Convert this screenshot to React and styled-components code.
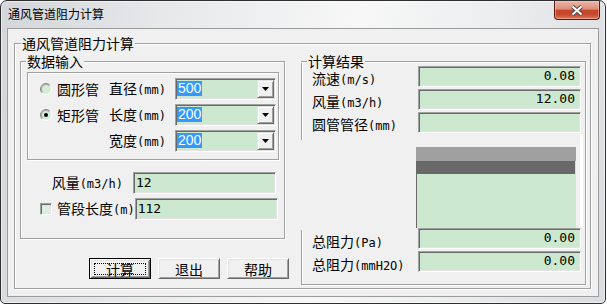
import React from 'react';
import styled, { createGlobalStyle, css } from 'styled-components';

const GREEN = '#cce8cf';
const FACE = '#f0f0f0';
const FONT = '"Noto Sans CJK SC", "Noto Sans", sans-serif';
const MONO = '"DejaVu Sans Mono", "Liberation Mono", monospace';

const GlobalStyle = createGlobalStyle`
  *, *::before, *::after { box-sizing: border-box; }
  html, body { margin: 0; padding: 0; background: #ffffff; }
  body { font-family: ${FONT}; font-size: 14px; color: #000; }
`;

const etched = css`
  border: 1px solid #a0a0a0;
  box-shadow: inset 1px 1px 0 #ffffff, 1px 1px 0 #ffffff;
`;

const sunken = css`
  border: 1px solid;
  border-color: #a0a0a0 #ffffff #ffffff #a0a0a0;
  box-shadow: inset 1px 1px 0 #696969, inset -1px -1px 0 #e3e3e3;
`;

const Window = styled.div`
  width: 606px;
  height: 304px;
  display: flex;
  flex-direction: column;
  padding: 0 6px 6px;
  border: 1px solid #2e2e2e;
  border-radius: 7px 7px 5px 5px;
  background: linear-gradient(100deg, #d3d6da 0%, #e6e8ea 25%, #f7f7f7 55%, #eceeef 75%, #d9dce0 100%);
  box-shadow: inset 0 0 0 1px rgba(255, 255, 255, 0.55);
  overflow: hidden;
`;

const TitleBar = styled.div`
  flex: none;
  height: 27px;
  display: flex;
  align-items: flex-start;
  justify-content: space-between;
`;

const Title = styled.div`
  padding: 6px 0 0 1px;
  font-size: 12px;
  line-height: 14px;
  color: #000;
`;

const CloseButton = styled.div`
  width: 46px;
  height: 19px;
  margin-right: -1px;
  display: flex;
  align-items: center;
  justify-content: center;
  border: 1px solid #5a1c12;
  border-top: 0;
  border-radius: 0 0 4px 4px;
  background: linear-gradient(to bottom, #ebb6a7 0%, #dc8e79 45%, #c7462a 52%, #c64a2f 75%, #dd7a5c 100%);
  box-shadow: inset 0 0 0 1px rgba(255, 210, 190, 0.45);
`;

const Client = styled.div`
  flex: 1;
  display: flex;
  flex-direction: column;
  padding: 14px 7px 7px 6px;
  background: ${FACE};
  border: 1px solid #9c9c9c;
`;

const OuterGroup = styled.div`
  ${etched}
  flex: 1;
  display: flex;
  flex-direction: column;
  padding: 0 4px 0 5px;
`;

const Legend = styled.div`
  align-self: flex-start;
  height: 14px;
  line-height: 14px;
  padding: 0 1px;
  margin: -8px 0 ${(p) => p.$mb}px ${(p) => p.$ml}px;
  background: ${FACE};
  white-space: nowrap;
`;

const Lat = styled.span`
  font-family: ${MONO};
  font-size: 12px;
`;

const Columns = styled.div`
  display: grid;
  grid-template-columns: 265px 285px;
  column-gap: 16px;
  align-items: start;
`;

const LeftColumn = styled.div`
  display: flex;
  flex-direction: column;
`;

const DataGroup = styled.div`
  ${etched}
  height: 178px;
  display: flex;
  flex-direction: column;
`;

const InnerBox = styled.div`
  ${etched}
  height: 88px;
  margin: 0 5px 0 6px;
  padding: 5px 2px 0 12px;
  display: grid;
  grid-template-columns: 12px 47px 1fr 101px;
  grid-auto-rows: 22px;
  row-gap: 4px;
  align-items: center;
`;

const RadioSvg = styled.svg`
  display: block;
`;

const RadioText = styled.span`
  margin-left: 5px;
  line-height: 16px;
  white-space: nowrap;
`;

const ShapeLabel = styled.span`
  grid-column: ${(p) => p.$col || 'auto'};
  text-align: right;
  padding-right: 9px;
  line-height: 16px;
  white-space: nowrap;
`;

const Combo = styled.div`
  ${sunken}
  height: 22px;
  padding: 1px;
  display: flex;
  align-items: stretch;
  justify-content: space-between;
  background: ${GREEN};
`;

const Selected = styled.span`
  align-self: flex-start;
  margin-top: 1px;
  height: 15px;
  line-height: 15px;
  padding: 0 1px;
  background: #3399ff;
  color: #ffffff;
  font-family: "Liberation Sans", Arial, sans-serif;
  font-size: 14px;
`;

const DropButton = styled.span`
  width: 17px;
  display: flex;
  align-items: center;
  justify-content: center;
  background: ${FACE};
  border: 1px solid;
  border-color: #e3e3e3 #696969 #696969 #e3e3e3;
  box-shadow: inset 1px 1px 0 #ffffff, inset -1px -1px 0 #a0a0a0;
`;

const FieldRow = styled.div`
  height: 22px;
  display: flex;
  align-items: center;
  justify-content: ${(p) => (p.$end ? 'flex-end' : 'flex-start')};
  margin: ${(p) => p.$mt}px 8px 0 0;
`;

const FieldLabel = styled.span`
  line-height: 16px;
  white-space: nowrap;
  margin: 0 ${(p) => p.$mr || 0}px 0 ${(p) => p.$ml || 0}px;
`;

const Edit = styled.div`
  ${sunken}
  flex: none;
  width: ${(p) => p.$w}px;
  height: ${(p) => p.$h}px;
  margin-left: ${(p) => (p.$auto ? 'auto' : '0')};
  margin-right: ${(p) => p.$mr || 0}px;
  padding: ${(p) => (p.$right ? '0 5px 1px 0' : '0 0 1px 2px')};
  display: flex;
  align-items: center;
  justify-content: ${(p) => (p.$right ? 'flex-end' : 'flex-start')};
  background: ${GREEN};
  font-family: ${MONO};
  font-size: 13px;
  line-height: 16px;
`;

const CheckBox = styled.span`
  ${sunken}
  flex: none;
  width: 12px;
  height: 12px;
  margin-left: 19px;
  background: #dcefdd;
`;

const ButtonRow = styled.div`
  display: flex;
  justify-content: flex-end;
  gap: 7px;
  margin: 19px -4px 0 0;
`;

const Button = styled.button`
  width: 62px;
  height: 21px;
  margin: 0;
  padding: 0;
  display: flex;
  align-items: center;
  justify-content: center;
  font-family: ${FONT};
  font-size: 14px;
  line-height: 16px;
  color: #000;
  background: ${FACE};
  border: 1px solid;
  border-color: #ffffff #696969 #696969 #ffffff;
  box-shadow: inset 1px 1px 0 #e3e3e3, inset -1px -1px 0 #a0a0a0;
  ${(p) =>
    p.$default &&
    css`
      border: 1px solid #000000;
      box-shadow: inset 1px 1px 0 #ffffff, inset -1px -1px 0 #696969,
        inset 2px 2px 0 #e3e3e3, inset -2px -2px 0 #a0a0a0;
    `}
`;

const FocusRect = styled.span`
  width: calc(100% - 8px);
  height: calc(100% - 7px);
  display: flex;
  align-items: center;
  justify-content: center;
  border: 1px dotted #000000;
`;

const ResultGroup = styled.div`
  height: 224px;
  display: flex;
  flex-direction: column;
  border: 1px solid #a0a0a0;
  border-left: 0;
  box-shadow: inset 0 1px 0 #ffffff, 1px 1px 0 #ffffff;
  background-color: ${FACE};
  background-image:
    linear-gradient(to bottom, #a0a0a0 0 78px, transparent 78px 168px, #a0a0a0 168px 100%),
    linear-gradient(to bottom, #ffffff 0 78px, transparent 78px 168px, #ffffff 168px 100%);
  background-size: 1px 100%, 1px 100%;
  background-position: 0 0, 1px 0;
  background-repeat: no-repeat;
`;

const ResultRow = styled.div`
  height: 21px;
  flex: none;
  display: flex;
  align-items: flex-start;
  margin-top: ${(p) => p.$mt || 0}px;
`;

const ResultLabel = styled.span`
  flex: 1;
  padding: ${(p) => p.$pt}px 0 0 11px;
  line-height: 16px;
  white-space: nowrap;
`;

const ListRow = styled.div`
  height: 94px;
  flex: none;
  margin: 1px 2px 0 0;
  display: flex;
  justify-content: flex-end;
  align-items: stretch;
  gap: 4px;
`;

const ListBox = styled.div`
  width: 160px;
  margin-top: 13px;
  display: flex;
  flex-direction: column;
  background: ${GREEN};
  border-left: 1px solid #696969;
`;

const ListHeadLight = styled.div`
  height: 14px;
  margin-left: -1px;
  background: #a0a0a0;
`;

const ListHeadDark = styled.div`
  height: 13px;
  margin-right: 1px;
  background: #696969;
`;

const EdgeStrip = styled.div`
  width: 3px;
  background: #ffffff;
`;

function Radio({ checked }) {
  return (
    <RadioSvg width="12" height="12" viewBox="0 0 12 12">
      <circle cx="6" cy="6" r="5.5" fill="#d6ecd8" />
      <path d="M2.1 9.9 A5.5 5.5 0 0 1 9.9 2.1" fill="none" stroke="#8c8c8c" />
      <path d="M9.9 2.1 A5.5 5.5 0 0 1 2.1 9.9" fill="none" stroke="#ffffff" />
      <path d="M2.8 9.2 A4.5 4.5 0 0 1 9.2 2.8" fill="none" stroke="#6a6a6a" strokeOpacity="0.5" />
      {checked && <circle cx="6" cy="6" r="2" fill="#000000" />}
    </RadioSvg>
  );
}

function ComboBox({ value }) {
  return (
    <Combo>
      <Selected>{value}</Selected>
      <DropButton>
        <svg width="7" height="4" viewBox="0 0 7 4">
          <path d="M0 0 H7 L3.5 4 Z" fill="#000000" />
        </svg>
      </DropButton>
    </Combo>
  );
}

export default function App() {
  return (
    <>
      <GlobalStyle />
      <Window>
        <TitleBar>
          <Title>通风管道阻力计算</Title>
          <CloseButton>
            <svg width="14" height="11" viewBox="0 0 14 11">
              <path d="M2.5 1.5 L11.5 9.5 M11.5 1.5 L2.5 9.5" stroke="#4a4a4a" strokeWidth="4" />
              <path d="M2.5 1.5 L11.5 9.5 M11.5 1.5 L2.5 9.5" stroke="#ffffff" strokeWidth="2" />
            </svg>
          </CloseButton>
        </TitleBar>
        <Client>
          <OuterGroup>
            <Legend $ml={1} $mb={11}>通风管道阻力计算</Legend>
            <Columns>
              <LeftColumn>
                <DataGroup>
                  <Legend $ml={5} $mb={4}>数据输入</Legend>
                  <InnerBox>
                    <Radio />
                    <RadioText>圆形管</RadioText>
                    <ShapeLabel>直径<Lat>(mm)</Lat></ShapeLabel>
                    <ComboBox value="500" />
                    <Radio checked />
                    <RadioText>矩形管</RadioText>
                    <ShapeLabel>长度<Lat>(mm)</Lat></ShapeLabel>
                    <ComboBox value="200" />
                    <ShapeLabel $col="3">宽度<Lat>(mm)</Lat></ShapeLabel>
                    <ComboBox value="200" />
                  </InnerBox>
                  <FieldRow $mt={12} $end>
                    <FieldLabel $mr={10}>风量<Lat>(m3/h)</Lat></FieldLabel>
                    <Edit $w={143} $h={22}>12</Edit>
                  </FieldRow>
                  <FieldRow $mt={4}>
                    <CheckBox />
                    <FieldLabel $ml={5}>管段长度<Lat>(m)</Lat></FieldLabel>
                    <Edit $w={143} $h={22} $auto>112</Edit>
                  </FieldRow>
                </DataGroup>
                <ButtonRow>
                  <Button $default>
                    <FocusRect>计算</FocusRect>
                  </Button>
                  <Button>退出</Button>
                  <Button>帮助</Button>
                </ButtonRow>
              </LeftColumn>
              <ResultGroup>
                <Legend $ml={6} $mb={-2}>计算结果</Legend>
                <ResultRow>
                  <ResultLabel $pt={4}>流速<Lat>(m/s)</Lat></ResultLabel>
                  <Edit $w={163} $h={21} $mr={4} $right>0.08</Edit>
                </ResultRow>
                <ResultRow $mt={2}>
                  <ResultLabel $pt={4}>风量<Lat>(m3/h)</Lat></ResultLabel>
                  <Edit $w={163} $h={21} $mr={4} $right>12.00</Edit>
                </ResultRow>
                <ResultRow $mt={2}>
                  <ResultLabel $pt={4}>圆管管径<Lat>(mm)</Lat></ResultLabel>
                  <Edit $w={163} $h={21} $mr={4} $right />
                </ResultRow>
                <ListRow>
                  <ListBox>
                    <ListHeadLight />
                    <ListHeadDark />
                  </ListBox>
                  <EdgeStrip />
                </ListRow>
                <ResultRow>
                  <ResultLabel $pt={5}>总阻力<Lat>(Pa)</Lat></ResultLabel>
                  <Edit $w={163} $h={21} $mr={4} $right>0.00</Edit>
                </ResultRow>
                <ResultRow $mt={2}>
                  <ResultLabel $pt={5}>总阻力<Lat>(mmH2O)</Lat></ResultLabel>
                  <Edit $w={163} $h={21} $mr={4} $right>0.00</Edit>
                </ResultRow>
              </ResultGroup>
            </Columns>
          </OuterGroup>
        </Client>
      </Window>
    </>
  );
}
